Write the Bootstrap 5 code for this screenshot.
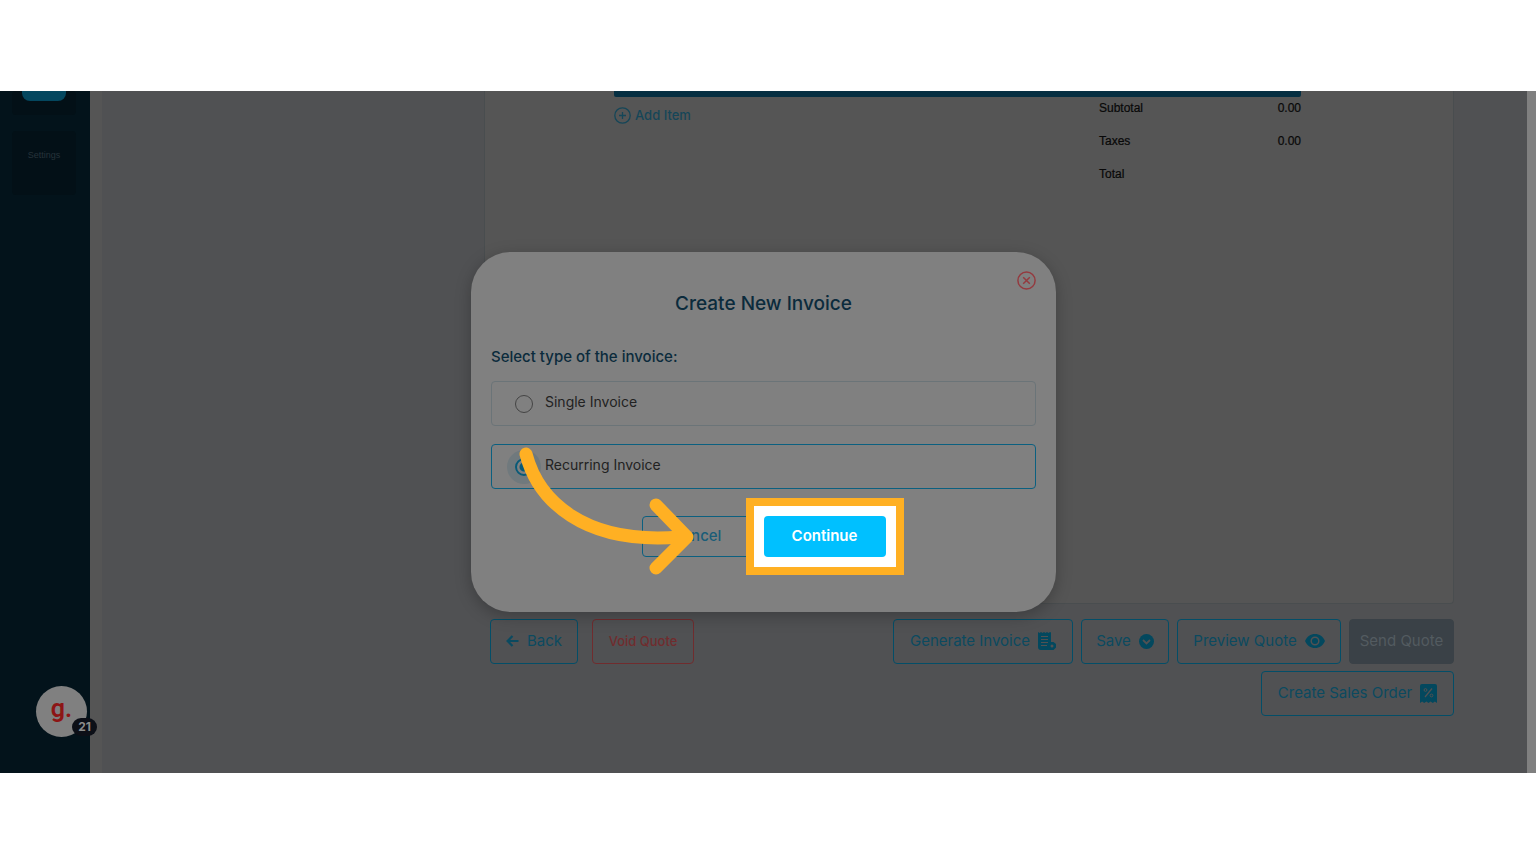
<!DOCTYPE html>
<html lang="en">
<head>
<meta charset="utf-8">
<meta name="viewport" content="width=device-width, initial-scale=1">
<title>Create New Invoice</title>
<link href="https://cdn.jsdelivr.net/npm/bootstrap@5.3.0/dist/css/bootstrap.min.css" rel="stylesheet">
<style>
  :root { --ui: Inter, "Open Sans", "Liberation Sans", sans-serif; --cyan: #034e68; --red: #702c2e; --amber: #ffb023; }
  body { font-family: var(--ui); font-size: 14px; line-height: 20px; background: #fff; color: #151515; }
  .stage { min-height: calc(100vh - 182px); background: #505153; overflow: hidden; }
  .side { width: 90px; background: #03131b; padding: 0 14px 0 12px; }
  .tile { height: 64px; border-radius: 4px; background: #031017; color: #26333a; font: 9px/12px "Liberation Sans", sans-serif; text-decoration: none; padding-top: 18px; }
  .tile-cut { height: 24px; padding: 0 10px; margin-bottom: 16px; }
  .tile-cut span { height: 10px; background: #04475f; border-radius: 0 0 8px 8px; }
  .gutter { width: 12px; background: #555; }
  .scroller { width: 9px; background: #808080; }
  .work { padding: 0 73px 57px 382px; }
  .sheet { background: #555; border: 1px solid #494d4f; border-top: 0; border-radius: 0 0 4px 4px; height: 513px; padding: 0 152px 0 129px; }
  .bar { height: 6px; background: #062f42; border-radius: 0 0 2px 2px; }
  .add { color: #154658; font-size: 13px; line-height: 18px; text-decoration: none; gap: 4px; margin-top: 9px; font-weight: 500; }
  .totals { width: 202px; font: 12px/16px "Liberation Sans", Arial, sans-serif; color: #080808; -webkit-text-stroke: 0.2px #080808; }
  .totals th { font-weight: 400; }
  .totals th, .totals td { padding: 3px 0 14px; }
  .actions { padding: 15px 0 0 6px; }
  .act { height: 45px; border: 1px solid var(--cyan); border-radius: 4px; background: transparent; color: #0b4a60; font-size: 15px; padding: 0 0 1px; white-space: nowrap; }
  .left-set { gap: 14px; }
  .right-set { gap: 7px 8px; max-width: 600px; }
  .w-back { width: 88px; } .w-void { width: 102px; } .w-gen { width: 180px; } .w-prev { width: 164px; }
  .w-send { width: 105px; } .w-order { width: 193px; }
  .act-red { border-color: var(--red); color: var(--red); font-size: 13px; font-weight: 500; }
  .act-off { background: #3a4147; border-color: #3a4147; color: #535b60; }
  .veil { position: absolute; inset: 0 9px 0 0; }
  .dialog-box { width: 585px; background: #808080; border-radius: 40px; padding: 19px 20px 55px; box-shadow: 0 4px 16px rgba(0,0,0,.25); color: #0b2b3c; }
  .x-btn { width: 19px; height: 19px; background: none; border: 0; padding: 0; line-height: 0; }
  .dlg-title { font-size: 19px; line-height: 28px; font-weight: 500; text-align: center; margin: 0 0 28px; }
  .ask { font-size: 15px; line-height: 22px; font-weight: 500; margin: 0 0 13px; }
  .opt { height: 45px; border: 1px solid #6b7478; border-radius: 4px; padding: 0 23px; gap: 12px; margin-bottom: 18px; color: #222; }
  .opt-on { border-color: #0b6080; margin-bottom: 27px; }
  .opt span { padding-bottom: 4px; font-size: 14px; }
  .opt input { appearance: none; width: 18px; height: 18px; border: 1px solid #444; border-radius: 50%; margin: 0; }
  .opt input:checked { border: 2px solid #085a78; background: radial-gradient(circle, #085a78 0 4px, transparent 5px); box-shadow: 0 0 0 8px #70797d; }
  .dlg-btn { height: 41px; border-radius: 4px; font-size: 15px; padding: 0 0 2px; }
  .cancel { width: 110px; border: 1px solid #0b6080; background: none; color: #1a5d78; font-weight: 500; }
  .go { width: 122px; border: 0; background: #00c0ff; color: #fff; font-weight: 600; }
  .spot { position: relative; z-index: 1; }
  .spot::before { content: ""; position: absolute; inset: -18px; border: 8px solid var(--amber); background: #fff; z-index: -1; }
  .arrow { position: absolute; left: 44px; top: 191px; z-index: 2; pointer-events: none; }
  .chat { position: absolute; left: 36px; bottom: 36px; width: 51px; height: 51px; border: 0; border-radius: 50%; background: #808080; color: #8d1515; font: 600 25px/24px Roboto, sans-serif; padding: 0 0 6px; }
  .count { position: absolute; left: 36px; top: 32px; width: 25px; height: 18px; border-radius: 9px; background: #0c0f17; color: #8c8c8c; font: 700 12px/18px Inter, sans-serif; }
</style>
</head>
<body class="d-flex align-items-center min-vh-100">
<div class="stage position-relative d-flex w-100">
  <nav class="side flex-shrink-0">
    <div class="tile tile-cut"><span class="d-block"></span></div>
    <a href="#" class="tile d-block text-center">Settings</a>
  </nav>
  <div class="gutter flex-shrink-0"></div>
  <main class="work flex-grow-1">
    <section class="sheet">
      <div class="bar"></div>
      <div class="d-flex justify-content-between align-items-start">
        <a href="#" class="add d-flex align-items-center">
          <svg width="17" height="17" viewBox="0 0 17 17" fill="none" stroke="currentColor" stroke-width="1.3"><circle cx="8.500" cy="8.500" r="7.700"/><path d="M8.500 5v7M5 8.500h7"/></svg>
          Add Item</a>
        <table class="totals">
          <tr><th scope="row">Subtotal</th><td class="text-end">0.00</td></tr>
          <tr><th scope="row">Taxes</th><td class="text-end">0.00</td></tr>
          <tr><th scope="row">Total</th><td></td></tr>
        </table>
      </div>
    </section>
    <div class="actions d-flex justify-content-between align-items-start">
      <div class="left-set d-flex flex-shrink-0">
        <button type="button" class="act w-back d-flex align-items-center justify-content-center gap-2">
          <svg width="13" height="12" viewBox="0 0 13 12" fill="none" stroke="currentColor" stroke-width="2.200"><path d="M12.500 6H2M6.500 1L1.600 6l4.900 5"/></svg>Back</button>
        <button type="button" class="act act-red w-void">Void Quote</button>
      </div>
      <div class="right-set d-flex flex-wrap justify-content-end">
        <button type="button" class="act w-gen d-flex align-items-center justify-content-center gap-2">Generate Invoice
          <svg width="18" height="18" viewBox="0 0 18 18" fill="#03485e"><path d="M0 0l1.500 1L3 0l1.500 1L6 0l1.500 1L9 0l1.500 1L12 0l1 .5V10h2.500l2.500 2v3.500L15.500 18H3a3 3 0 0 1-3-3z"/><path d="M3 4.500h7M3 7.500h7M3 10.500h7M3 13.500h6" stroke="#505153" stroke-width="1.100"/><circle cx="14" cy="14" r="1.500" fill="#505153"/></svg></button>
        <button type="button" class="act w-back d-flex align-items-center justify-content-center gap-2">Save
          <svg width="15" height="15" viewBox="0 0 15 15"><circle cx="7.500" cy="7.500" r="7.500" fill="#03485e"/><path d="M4 6l3.500 3.500L11 6" fill="none" stroke="#505153" stroke-width="1.800"/></svg></button>
        <button type="button" class="act w-prev d-flex align-items-center justify-content-center gap-2">Preview Quote
          <svg width="20" height="14" viewBox="0 0 20 14"><path d="M0 7C2 2.500 5.500 0 10 0s8 2.500 10 7c-2 4.500-5.500 7-10 7S2 11.500 0 7z" fill="#03485e"/><circle cx="10" cy="7" r="3.800" fill="none" stroke="#505153" stroke-width="1.500"/></svg></button>
        <button type="button" class="act act-off w-send">Send Quote</button>
        <button type="button" class="act w-order d-flex align-items-center justify-content-center gap-2">Create Sales Order
          <svg width="17" height="19" viewBox="0 0 17 19"><path d="M2 0h13a2 2 0 0 1 2 2v17l-2.100-1.500L12.800 19l-2.200-1.500L8.500 19l-2.100-1.500L4.200 19l-2.100-1.500L0 19V2a2 2 0 0 1 2-2z" fill="#03485e"/><path d="M12 4.500l-7 8.500" stroke="#505153" stroke-width="1.300"/><circle cx="5.500" cy="6" r="1.400" fill="none" stroke="#505153"/><circle cx="11.500" cy="11.500" r="1.400" fill="none" stroke="#505153"/></svg></button>
      </div>
    </div>
  </main>
  <div class="scroller flex-shrink-0"></div>

  <button type="button" class="chat" aria-label="Open chat">g.<span class="count">21</span></button>

  <div class="veil d-flex align-items-center justify-content-center">
    <form class="dialog-box position-relative" role="dialog" aria-labelledby="dlgTitle">
      <div class="d-flex justify-content-end">
        <button type="button" class="x-btn" aria-label="Close"><svg width="19" height="19" viewBox="0 0 19 19" fill="none" stroke="#943a3f" stroke-width="1.500"><circle cx="9.500" cy="9.500" r="8.600"/><path d="M6.200 6.200l6.600 6.600M12.800 6.200l-6.600 6.600"/></svg></button>
      </div>
      <h1 class="dlg-title" id="dlgTitle">Create New Invoice</h1>
      <p class="ask" id="ask">Select type of the invoice:</p>
      <div role="radiogroup" aria-labelledby="ask">
        <label class="opt d-flex align-items-center"><input type="radio" name="kind"><span>Single Invoice</span></label>
        <label class="opt opt-on d-flex align-items-center"><input type="radio" name="kind" checked><span>Recurring Invoice</span></label>
      </div>
      <div class="d-flex justify-content-center" style="gap:12px">
        <button type="button" class="dlg-btn cancel">Cancel</button>
        <div class="spot"><button type="submit" class="dlg-btn go">Continue</button></div>
      </div>
      <svg class="arrow" width="185" height="136" viewBox="515 443 185 136" fill="none" stroke="#ffb023" stroke-width="13" stroke-linecap="round" stroke-linejoin="round" aria-hidden="true"><path d="M526 454C538 500 583 545 680 537"/><path d="M656 505L687 537L656 568"/></svg>
    </form>
  </div>
</div>
<script src="https://cdn.jsdelivr.net/npm/bootstrap@5.3.0/dist/js/bootstrap.bundle.min.js"></script>
</body>
</html>
